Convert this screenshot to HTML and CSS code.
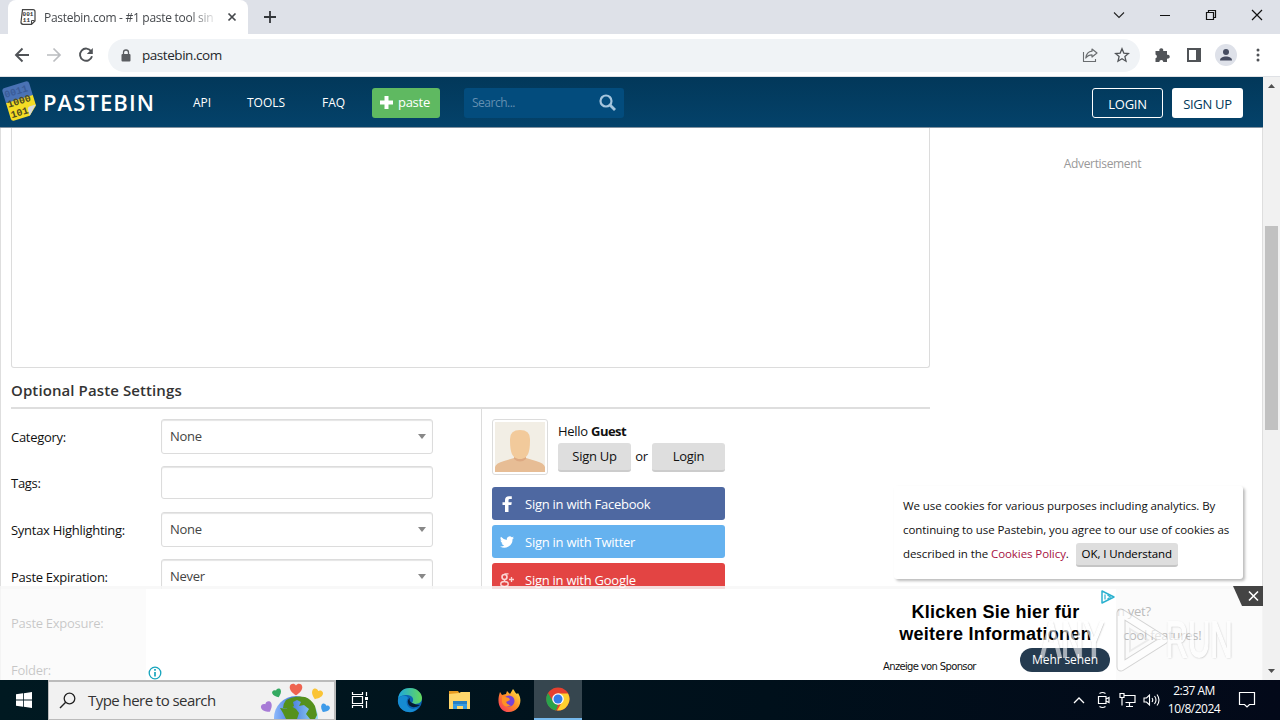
FILE: index.html
```html
<!DOCTYPE html>
<html lang="en">
<head>
  <meta charset="UTF-8" />
  <meta name="viewport" content="width=device-width, initial-scale=1" />
  <title>Pastebin.com - #1 paste tool since 2002!</title>
  <link rel="stylesheet" href="styles.css">
</head>
<body>
  <!-- browser tabs -->
  <div class="tabs">
    <div class="tab">
      <svg class="favicon" width="16" height="16" viewBox="0 0 16 16">
        <path d="M2.500 .7h10.500q2 0 2 2v9.300L11.500 15.300H3Q.8 15 1 13z" fill="#fff" stroke="#444" stroke-width="1.200"/>
        <path d="M14.500 11.500h-3V15" fill="none" stroke="#444"/>
        <text x="2.600" y="7.300">001</text>
        <text x="2.800" y="13.300">11</text>
      </svg>
      <span class="tab-title">Pastebin.com - #1 paste tool sin</span>
      <svg width="10" height="10" viewBox="0 0 10 10"><path d="M1.500 1.500l7 7M8.500 1.500l-7 7" stroke="#45484c" stroke-width="1.700"/></svg>
    </div>
    <svg class="new-tab" width="14" height="14" viewBox="0 0 14 14"><path d="M7 1v12M1 7h12" stroke="#33363a" stroke-width="1.800"/></svg>
    <div class="window-buttons">
      <svg width="12" height="12" viewBox="0 0 12 12"><path d="M1 3.500l5 5 5-5" fill="none" stroke="#222" stroke-width="1.100"/></svg>
      <svg width="12" height="12" viewBox="0 0 12 12"><path d="M1 6.500h10" stroke="#111"/></svg>
      <svg width="12" height="12" viewBox="0 0 12 12"><path d="M1.500 3.500h7v7h-7zM3.500 3.500v-2h7v7h-2" fill="none" stroke="#111" stroke-width="1.200"/></svg>
      <svg width="12" height="12" viewBox="0 0 12 12"><path d="M1 1l10 10M11 1L1 11" stroke="#111" stroke-width="1.200"/></svg>
    </div>
  </div>

  <div class="toolbar">
    <div class="nav-buttons">
      <svg width="16" height="16" viewBox="0 0 16 16"><path d="M15 8H2M8.500 1.500L2 8l6.500 6.500" fill="none" stroke="#505357" stroke-width="1.900"/></svg>
      <svg width="16" height="16" viewBox="0 0 16 16"><path d="M1 8h13M7.500 1.500L14 8l-6.500 6.500" fill="none" stroke="#bbbdc0" stroke-width="1.700"/></svg>
      <svg width="16" height="16" viewBox="0 0 16 16"><path d="M13.200 4.300A6.100 6.100 0 1 0 14 9.300" fill="none" stroke="#505357" stroke-width="1.900"/><path d="M14.800 1v6h-6z" fill="#505357"/></svg>
    </div>
    <div class="address">
      <svg width="10" height="13" viewBox="0 0 10 13"><rect x="0.500" y="5" width="9" height="7.500" rx="1" fill="#5a5d61"/><path d="M2.500 5.500V3.500a2.500 2.500 0 0 1 5 0v2" fill="none" stroke="#5a5d61" stroke-width="1.300"/></svg>
      <span class="url">pastebin.com</span>
      <svg width="16" height="16" viewBox="0 0 16 16"><path d="M1.500 5v9.500h12V12" fill="none" stroke="#6a6d70" stroke-width="1.100"/><path d="M10 2l5 4-5 4V7.800C7 7.800 5.300 8.800 3.800 11 4.300 7 6.500 4.600 10 4.200z" fill="none" stroke="#6a6d70" stroke-width="1.200" stroke-linejoin="round"/></svg>
      <svg width="16" height="16" viewBox="0 0 16 16"><path d="M8 1.800l1.800 4.300 4.700.4-3.600 3.100 1.100 4.600L8 11.700l-4 2.500 1.100-4.600L1.500 6.500l4.700-.4z" fill="none" stroke="#505357" stroke-width="1.300"/></svg>
    </div>
    <div class="toolbar-actions">
      <svg width="16" height="16" viewBox="0 0 16 16"><path d="M1.500 4h4a2 2 0 1 1 3.600 0H13v3.800a2 2 0 1 1 0 3.700V15H9.300a2 2 0 0 0-4 0H1.500v-3.700a2 2 0 0 0 0-3.800z" fill="#505357"/></svg>
      <svg width="16" height="16" viewBox="0 0 16 16"><path d="M1 1h14v14H1zM3 3v10h7V3z" fill="#505357" fill-rule="evenodd"/></svg>
      <svg class="profile" width="22" height="22" viewBox="0 0 22 22"><circle cx="11" cy="11" r="11" fill="#dee1e9"/><circle cx="11" cy="8" r="3" fill="#454b60"/><path d="M5 16.500c0-3 3-4 6-4s6 1 6 4z" fill="#454b60"/></svg>
      <svg width="4" height="16" viewBox="0 0 4 16"><circle cx="2" cy="3" r="1.500" fill="#505357"/><circle cx="2" cy="8" r="1.500" fill="#505357"/><circle cx="2" cy="13" r="1.500" fill="#505357"/></svg>
    </div>
  </div>

  <div class="viewport">
    <div class="page">
      <header class="site-header">
        <svg class="logo" width="38" height="42" viewBox="0 0 38 42">
          <g transform="rotate(-17 19 21)">
            <path d="M8 4h22q3 0 3 3v13H5V7q0-3 3-3z" fill="#4a72b5"/>
            <path d="M5 19h28v11l-9 8H8q-3 0-3-3z" fill="#f4dc25"/>
            <path d="M33 29l-9 9v-6q0-3 3-3z" fill="#d6d8dc"/>
            <text class="bits bits-top" x="6" y="14">0011</text>
            <text class="bits" x="6" y="24">1000</text>
            <text class="bits" x="6" y="35">101</text>
          </g>
        </svg>
        <span class="brand">PASTEBIN</span>
        <nav class="site-nav">
          <a class="nav-api">API</a>
          <a class="nav-tools">TOOLS</a>
          <a class="nav-faq">FAQ</a>
        </nav>
        <a class="btn-paste">
          <svg width="13" height="13" viewBox="0 0 13 13"><path d="M6.500 0v13M0 6.500h13" stroke="#fff" stroke-width="4"/></svg>
          <span>paste</span>
        </a>
        <div class="search">
          <span>Search...</span>
          <svg width="17" height="17" viewBox="0 0 17 17"><circle cx="7" cy="7" r="5.500" fill="none" stroke="#a5c5dd" stroke-width="2.200"/><path d="M11 11l5 5" stroke="#a5c5dd" stroke-width="2.800"/></svg>
        </div>
        <div class="account">
          <a class="btn-login">LOGIN</a>
          <a class="btn-signup">SIGN UP</a>
        </div>
      </header>

      <div class="content">
        <main>
          <div class="paste-box"></div>
          <h2>Optional Paste Settings</h2>
          <div class="settings">
            <div class="fields">
              <div class="field"><label>Category:</label><div class="select">None</div></div>
              <div class="field"><label>Tags:</label><div class="input"></div></div>
              <div class="field"><label>Syntax Highlighting:</label><div class="select">None</div></div>
              <div class="field"><label>Paste Expiration:</label><div class="select">Never</div></div>
              <div class="field"><label>Paste Exposure:</label></div>
              <div class="field"><label>Folder:</label></div>
            </div>
            <div class="login-panel">
              <div class="guest">
                <div class="avatar">
                  <svg width="50" height="50" viewBox="0 0 50 50"><rect width="50" height="50" fill="#f2eee5"/><path d="M0 50v-5q1-4 9-6l10-3h12l10 3q8 2 9 6v5z" fill="#e7bd95"/><path d="M19 32h12v5q-6 5-12 0z" fill="#dda982"/><path d="M15 17q0-9 10-9t10 9c0 11-1 20-10 20S15 28 15 17z" fill="#f2ca9b"/></svg>
                </div>
                <div>
                  <p class="hello">Hello <b>Guest</b></p>
                  <div class="guest-buttons"><a class="btn-grey">Sign Up</a><span>or</span><a class="btn-grey">Login</a></div>
                </div>
              </div>
              <a class="social facebook">
                <svg width="14" height="18" viewBox="0 0 14 18"><path d="M5 17v-7H2.500V7.200H5V5q0-3.800 4-3.800h2.800v2.900H9.800Q8.500 4.100 8.500 5.300v1.900h3.300l-.5 2.800H8.500v7z" fill="#fff"/></svg>
                <span>Sign in with Facebook</span>
              </a>
              <a class="social twitter">
                <svg width="14" height="14" viewBox="0 0 24 24"><path d="M24 4.600a10 10 0 0 1-2.800.8 5 5 0 0 0 2.100-2.700 10 10 0 0 1-3.100 1.200A4.900 4.900 0 0 0 11.800 8.400 14 14 0 0 1 1.700 3.200a4.900 4.900 0 0 0 1.500 6.600 5 5 0 0 1-2.200-.6c0 2.300 1.600 4.400 3.900 4.900a5 5 0 0 1-2.200.1 4.900 4.900 0 0 0 4.600 3.400A9.900 9.900 0 0 1 0 19.500a14 14 0 0 0 21.500-12.400A10 10 0 0 0 24 4.600z" fill="#fff"/></svg>
                <span>Sign in with Twitter</span>
              </a>
              <a class="social google">
                <svg width="14" height="16" viewBox="0 0 14 16"><circle cx="4.500" cy="5" r="2.500" fill="none" stroke="#fbd5d4" stroke-width="1.600"/><ellipse cx="4.500" cy="12" rx="3.700" ry="2.400" fill="none" stroke="#fbd5d4" stroke-width="1.500"/><path d="M4.500 1.800H8.500M5 7.500q-1.500 1 1 2.500M9 7.500h5M11.500 5v5" fill="none" stroke="#fbd5d4" stroke-width="1.300"/></svg>
                <span>Sign in with Google</span>
              </a>
            </div>
          </div>
        </main>
        <aside>Advertisement</aside>
      </div>

      <div class="cookies">
        We use cookies for various purposes including analytics. By<br>
        continuing to use Pastebin, you agree to our use of cookies as<br>
        described in the <a>Cookies Policy</a>. <button type="button">OK, I Understand</button>
      </div>

      <div class="ad-bar">
        <div class="ad-side"></div>
        <div class="ad-body">
          <svg class="ad-info" width="14" height="14" viewBox="0 0 14 14"><circle cx="7" cy="7" r="5.800" fill="#fff" stroke="#18a5bd" stroke-width="1.300"/><path d="M7 6v4.500M7 3v1.800" stroke="#18a5bd" stroke-width="1.700"/></svg>
          <div class="ad-copy">
            <strong>Klicken Sie hier für<br>weitere Informationen</strong>
            <div class="ad-row"><span class="sponsor">Anzeige von Sponsor</span><a class="ad-more">Mehr sehen</a></div>
          </div>
        </div>
        <div class="ad-right">
          <p>n yet?</p>
          <p class="features">cool features!</p>
        </div>
        <svg class="ad-choices" width="14" height="14" viewBox="0 0 14 14"><path d="M1 1v12l12-6z" fill="#fff" stroke="#2bb1cf" stroke-width="1.500" stroke-linejoin="round"/><path d="M4 4.500v5M6.500 5L9.500 7l-3 2" fill="none" stroke="#2bb1cf" stroke-width="1.200"/></svg>
        <svg class="ad-close" width="30" height="20" viewBox="0 0 30 20"><path d="M0 0h30v20H9z" fill="#444"/><path d="M16 5.500l9 9M25 5.500l-9 9" stroke="#fff" stroke-width="1.600"/></svg>
        <div class="watermark">
          <span>ANY</span>
          <svg width="54" height="66" viewBox="0 0 54 66"><path d="M5 6v54l43-27z" fill="none" stroke="#b8b8b8" stroke-width="9" stroke-linejoin="round"/><path d="M5 6v54l43-27z" fill="none" stroke="#fff" stroke-width="7" stroke-linejoin="round"/><path d="M14 22v22l18-11z" fill="none" stroke="#e2e2e2" stroke-width="2"/></svg>
          <span>RUN</span>
        </div>
      </div>
    </div>
    <div class="scrollbar">
      <svg width="7" height="4" viewBox="0 0 7 4"><path d="M0 4l3.500-4L7 4z" fill="#505050"/></svg>
      <div class="thumb"></div>
      <svg class="down" width="7" height="4" viewBox="0 0 7 4"><path d="M0 0l3.500 4L7 0z" fill="#505050"/></svg>
    </div>
  </div>

  <!-- windows taskbar -->
  <div class="taskbar">
    <div class="start"><svg width="16" height="16" viewBox="0 0 16 16"><path d="M0 2.300l7-1v6.300H0zM7.800 1.200L16 0v7.600H7.800zM0 8.400h7v6.300l-7-1zM7.800 8.400H16V16l-8.200-1.200z" fill="#fff"/></svg></div>
    <div class="task-search">
      <svg width="17" height="17" viewBox="0 0 17 17"><circle cx="10.500" cy="6.500" r="5.300" fill="none" stroke="#222" stroke-width="1.300"/><path d="M6.700 10.300L1 16" stroke="#222" stroke-width="1.400"/></svg>
      <span>Type here to search</span>
      <svg class="globe" width="72" height="37" viewBox="0 0 72 37">
        <defs>
          <linearGradient id="sea"><stop offset="0" stop-color="#8db9fb"/><stop offset="0.400" stop-color="#4a7ee0"/><stop offset="1" stop-color="#9fdcf4"/></linearGradient>
          <path id="heart" d="M0 7C-3 5-7 2-7-2-7-6-2-7 0-4 2-7 7-6 7-2 7 2 3 5 0 7z"/>
        </defs>
        <circle cx="36" cy="36" r="22" fill="url(#sea)"/>
        <path d="M26 18q9-5 19-3 6 2 10 9l2 9-2 4h-5l-4-5 3-5-5-4-5 1 2-4-4-2-4 2 1 4-5 3-6-1q0-4 3-8zM20 26l7 1 4-3 5 3 3 4-2 6H26l-3-6z" fill="#55911c"/>
        <use href="#heart" fill="#ef6350" transform="translate(36 7) scale(.9)"/>
        <use href="#heart" fill="#34aa61" transform="translate(17 11) rotate(-22) scale(.65)"/>
        <use href="#heart" fill="#fac436" transform="translate(57 12) rotate(22) scale(.8)"/>
        <use href="#heart" fill="#a77bd6" transform="translate(7 25) rotate(-30) scale(.8)"/>
        <use href="#heart" fill="#3e9bea" transform="translate(65 26) rotate(28) scale(.65)"/>
      </svg>
    </div>
    <div class="apps">
      <div class="app"><svg width="18" height="18" viewBox="0 0 18 18"><path d="M1.500 1v2.500h10V1M1.500 17v-2.500h10V17M1.500 5.500h10v7h-10zM15.500 1v4M15.500 10v7" fill="none" stroke="#fff" stroke-width="1.200"/><path d="M14 6h3v3h-3z" fill="#fff"/></svg></div>
      <div class="app"><svg width="26" height="26" viewBox="0 0 26 26">
        <defs><linearGradient id="edge" x2="1"><stop offset="0" stop-color="#1ca7df"/><stop offset="1" stop-color="#65d95b"/></linearGradient></defs>
        <circle cx="13" cy="13" r="12" fill="#0b63b4"/>
        <path d="M1 12C2 4 7 1 13 1c7 0 12 5 12 10 0 6-7 7-10 5 3-4 0-8-5-8-4 0-8 1-9 4z" fill="url(#edge)"/>
        <path d="M1 12c2-4 9-4 10-1-3 4-1 10 5 11l5-1q-4 5-10 4C4 24 0 18 1 12z" fill="#168bd1"/>
        <path d="M15 16c-2-1-3-3-2-5q-3 2-2 5c1 4 6 6 12 2q-4 0-8-2z" fill="#061c33"/>
      </svg></div>
      <div class="app"><svg width="24" height="22" viewBox="0 0 24 22"><path d="M1 2h9l2 3H1z" fill="#e79b22"/><path d="M1 5l10-1 2-1h9v17H1z" fill="#ffd66b"/><path d="M5 12h14v8h-4v-3H9v3H5z" fill="#389be0"/><path d="M5 12h14v3H5z" fill="#287fc2"/></svg></div>
      <div class="app"><svg width="24" height="24" viewBox="0 0 24 24">
        <defs><linearGradient id="fox" x1="1" y1="0" x2="0" y2="1"><stop offset="0" stop-color="#fff04a"/><stop offset="0.500" stop-color="#ff8b24"/><stop offset="1" stop-color="#f62b67"/></linearGradient></defs>
        <path d="M3 4l2 3 4-1 1-3 3 3 3-5c2 2 2 4 4 5l1-1c6 9 0 19-9 19S-1 15 3 4z" fill="url(#fox)"/>
        <circle cx="12" cy="13" r="5.500" fill="#7743d5"/>
        <path d="M5 8l7 2 1 2-4 2q1 3 5 3-7 4-9-3z" fill="#ff9225"/>
      </svg></div>
      <div class="app active"><svg width="24" height="24" viewBox="0 0 24 24"><circle cx="12" cy="12" r="11.500" fill="#e5402f"/><path d="M2 6l6 10 4 2-2 5.500A11.500 11.500 0 0 1 2 6z" fill="#2aa34b"/><path d="M12 6.500h10A11.500 11.500 0 0 1 11 23.500l6-10z" fill="#fdd02f"/><circle cx="12" cy="12" r="5.800" fill="#fff"/><circle cx="12" cy="12" r="4.500" fill="#337ce8"/></svg></div>
    </div>
    <div class="tray">
      <svg width="12" height="8" viewBox="0 0 12 8"><path d="M1 7l5-5 5 5" fill="none" stroke="#fff" stroke-width="1.300"/></svg>
      <svg width="14" height="18" viewBox="0 0 14 18"><path d="M1.500 5.500h7.500v7H1.500zM9 8l3-1.500v5L9 10M2.500 2.500q3-2 6 0M2.500 15.500q3 2 6 0" fill="none" stroke="#fff" stroke-width="1.200"/></svg>
      <svg width="17" height="16" viewBox="0 0 17 16"><path d="M5 3.500h11v7H6.500M10.500 11v3M7 14.500h7M1 1.500h4v4H1zM3 6v7.500" fill="none" stroke="#fff" stroke-width="1.200"/></svg>
      <svg class="volume" width="18" height="16" viewBox="0 0 18 16"><path d="M1 6h2.500l3-3v10l-3-3H1zM9 6q1.500 2 0 4M11.500 4q3 4 0 8M14 2.500q4 5.500 0 11" fill="none" stroke="#fff" stroke-width="1.100"/></svg>
      <div class="clock">2:37 AM<br>10/8/2024</div>
      <svg class="notes" width="18" height="18" viewBox="0 0 18 18"><path d="M1.500 1.500h15v12h-5L9 16l-2.500-2.500h-5z" fill="none" stroke="#fff" stroke-width="1.200"/></svg>
    </div>
  </div>
</body>
</html>
```

FILE: styles.css
```css
:root {
  --navy: #023859;
  --border: #dcdcdc;
  --font-ui: 'Open Sans', 'Noto Sans', sans-serif;
}

* {
  box-sizing: border-box;
}

body {
  margin: 0;
  width: 1280px;
  height: 720px;
  overflow: hidden;
  display: flex;
  flex-direction: column;
  font-family: var(--font-ui);
  font-size: 13px;
  letter-spacing: -0.28px;
  color: #111;
  background: #fff;
}

svg {
  display: block;
  flex: none;
}

p {
  margin: 0;
}

/* browser chrome */
.tabs {
  height: 34px;
  flex: none;
  display: flex;
  align-items: center;
  background: #dee1e8;
  padding-left: 8px;
}

.tab {
  width: 240px;
  height: 34px;
  display: flex;
  align-items: center;
  padding: 0 11px 0 12px;
  background: #fff;
  border-radius: 8px 8px 0 0;
}

.favicon text {
  font: bold 6px 'Liberation Mono', monospace;
  letter-spacing: 0;
  fill: #333;
}

.tab-title {
  width: 171px;
  margin: 0 12px 0 8px;
  flex: none;
  white-space: nowrap;
  font-size: 12px;
  letter-spacing: -0.28px;
  color: #45484c;
  -webkit-mask-image: linear-gradient(to right, #000 145px, transparent 174px);
  mask-image: linear-gradient(to right, #000 145px, transparent 174px);
}

.new-tab {
  margin-left: 15px;
}

.window-buttons {
  margin-left: auto;
  padding: 0 17px 5px 0;
  display: flex;
  gap: 34px;
}

.toolbar {
  height: 43px;
  flex: none;
  display: flex;
  align-items: center;
  border-bottom: 1px solid #dfe1e5;
  padding: 0 20px 0 14px;
}

.nav-buttons {
  display: flex;
  gap: 16px;
}

.address {
  width: 1032px;
  height: 33px;
  margin-left: 14px;
  padding: 0 10px 0 13px;
  display: flex;
  align-items: center;
  gap: 16px;
  border-radius: 17px;
  background: #f0f3f6;
}

.url {
  flex: 1;
  margin-left: -5px;
  font-size: 13.5px;
  letter-spacing: -0.45px;
  color: #26282b;
}

.toolbar-actions {
  margin-left: auto;
  display: flex;
  align-items: center;
  gap: 16px;
}

.profile {
  margin: 0 3px 0 -3px;
}

/* page */
.viewport {
  height: 603px;
  flex: none;
  display: flex;
}

.page {
  position: relative;
  width: 1263px;
  overflow: hidden;
}

.site-header {
  height: 51px;
  display: flex;
  align-items: center;
  padding: 1px 20px 0 1px;
  background: linear-gradient(#02385a, #04426a);
  border-bottom: 1px solid #8292a0;
  color: #fff;
}

.logo {
  margin-top: -3px;
}

.bits {
  font: bold 10px 'Liberation Mono', monospace;
  letter-spacing: 0;
  fill: #4e4a20;
}

.bits-top {
  fill: #3a5c98;
}

.brand {
  width: 150px;
  margin-left: 4px;
  padding-bottom: 1px;
  font-size: 22px;
  font-weight: 600;
  letter-spacing: 1.1px;
}

.site-nav {
  display: flex;
  width: 179px;
  padding-bottom: 1px;
  font-size: 12px;
  letter-spacing: 0;
}

.nav-api {
  width: 54px;
}

.nav-tools {
  width: 75px;
}

.btn-paste {
  width: 68px;
  height: 30px;
  display: flex;
  align-items: center;
  gap: 5px;
  padding: 0 0 1px 8px;
  border-radius: 3px;
  background: #5fb961;
  font-size: 13px;
}

.search {
  width: 160px;
  height: 30px;
  margin-left: 24px;
  padding: 0 8px 1px;
  display: flex;
  align-items: center;
  justify-content: space-between;
  border-radius: 3px;
  background: #034c7d;
  font-size: 12px;
  letter-spacing: -0.5px;
  color: #638fb1;
}

.account {
  display: flex;
  gap: 9px;
  margin-left: auto;
}

.btn-login,
.btn-signup {
  width: 71px;
  height: 30px;
  line-height: 32px;
  text-align: center;
  border-radius: 3px;
  background: #fff;
  color: var(--navy);
}

.btn-login {
  background: none;
  border: 1px solid #fff;
  line-height: 30px;
  color: #fff;
}

.content {
  height: 552px;
  display: flex;
  padding-left: 10px;
  border: solid #dedede;
  border-width: 0 1px;
}

main {
  width: 919px;
  flex: none;
}

.paste-box {
  height: 240px;
  border: 1px solid var(--border);
  border-top: 0;
  border-radius: 0 0 3px 3px;
}

h2 {
  margin: 0;
  height: 41px;
  line-height: 45px;
  border-bottom: 2px solid #dedede;
  font-size: 15px;
  font-weight: 600;
  letter-spacing: 0.1px;
  color: #333;
}

.settings {
  display: flex;
}

.fields {
  width: 471px;
  padding-top: 4px;
  border-right: 1px solid var(--border);
}

.field {
  height: 46.6px;
  display: flex;
  align-items: center;
}

.field label {
  width: 150px;
  padding-top: 1px;
}

.select,
.input {
  width: 272px;
  height: 35px;
  border: 1px solid var(--border);
  border-radius: 3px;
  box-shadow: inset 0 1px 1px #e5e5e5;
}

.input {
  height: 33px;
}

.select {
  display: flex;
  align-items: center;
  justify-content: space-between;
  padding: 0 6px 0 8px;
  color: #444;
}

.select::after {
  content: '';
  border: 4px solid transparent;
  border-top: 5px solid #888;
  border-bottom: 0;
}

.login-panel {
  width: 243px;
  padding: 10px 0 0 10px;
}

.guest {
  display: flex;
  gap: 10px;
  margin-bottom: 12px;
}

.avatar {
  width: 56px;
  height: 56px;
  padding: 2px;
  border: 1px solid var(--border);
  border-radius: 3px;
}

.hello {
  height: 24px;
  line-height: 25px;
}

.hello b {
  letter-spacing: -0.5px;
}

.guest-buttons {
  display: flex;
  align-items: center;
  justify-content: space-between;
  width: 167px;
}

.guest-buttons span {
  padding-bottom: 3px;
}

.btn-grey {
  width: 73px;
  height: 29px;
  line-height: 27px;
  text-align: center;
  border-radius: 3px;
  border-bottom: 2px solid #ccc;
  background: #dedede;
}

.social {
  height: 33px;
  margin-bottom: 5px;
  padding-left: 8px;
  display: flex;
  align-items: center;
  gap: 11px;
  border-radius: 3px;
  letter-spacing: -0.25px;
  color: #fff;
}

.facebook { background: #4e68a1; }
.twitter { background: #65b2ef; }
.google { background: #e34443; }

aside {
  flex: 1;
  padding: 27px 0 0 13px;
  text-align: center;
  font-size: 12px;
  letter-spacing: -0.35px;
  color: #999;
}

.cookies {
  position: absolute;
  right: 20px;
  bottom: 101px;
  width: 349px;
  height: 93px;
  padding: 8px 0 0 9px;
  border-radius: 3px;
  background: #fff;
  box-shadow: 2px 2px 3px #bbb;
  font-size: 11.5px;
  line-height: 24px;
  letter-spacing: -0.07px;
  white-space: nowrap;
}

.cookies a {
  color: #a7113f;
}

.cookies button {
  width: 102px;
  height: 24px;
  margin-left: 4px;
  padding: 0;
  border: 0;
  border-bottom: 2px solid #c5c5c5;
  border-radius: 3px;
  background: #dedede;
  font: inherit;
  line-height: 20px;
  letter-spacing: -0.1px;
}

/* sticky ad over the bottom of the page */
.ad-bar {
  position: absolute;
  inset: auto 0 0 0;
  height: 94px;
  display: flex;
  border-top: 3px solid rgba(247, 247, 247, 0.85);
}

.ad-side,
.ad-right {
  background: rgba(250, 250, 250, 0.78);
}

.ad-side {
  width: 146px;
}

.ad-body {
  width: 970px;
  background: #fff;
  display: flex;
  justify-content: space-between;
}

.ad-info {
  margin: 77px 0 0 2px;
}

.ad-copy {
  width: 234px;
  padding-top: 12px;
}

.ad-copy strong {
  display: block;
  margin-right: 7px;
  font: bold 18px/22px 'Liberation Sans', sans-serif;
  letter-spacing: 0.25px;
  text-align: center;
  color: #000;
  white-space: nowrap;
}

.ad-row {
  display: flex;
  align-items: center;
  justify-content: space-between;
  width: 228px;
  margin-top: 3px;
}

.sponsor {
  padding: 12px 0 0 1px;
  font: 10px 'DejaVu Sans', sans-serif;
  letter-spacing: -0.65px;
  white-space: nowrap;
}

.ad-more {
  width: 90px;
  height: 24px;
  flex: none;
  border-radius: 12px;
  background: #253b50;
  font-size: 12px;
  line-height: 23px;
  letter-spacing: -0.1px;
  text-align: center;
  color: #fff;
}

.ad-right {
  flex: 1;
  padding: 10px 0 0 1px;
  line-height: 24px;
  color: #bbb;
}

.ad-right .features {
  padding-left: 6px;
}

.ad-choices {
  position: absolute;
  left: 1101px;
  top: 1px;
}

.ad-close {
  position: absolute;
  right: 0;
  top: -3px;
}

.watermark {
  position: absolute;
  right: 29px;
  top: 18px;
  height: 66px;
  display: flex;
  align-items: center;
  opacity: 0.6;
  font: 50px 'Liberation Sans', sans-serif;
  letter-spacing: 0;
  color: #fff;
  -webkit-text-stroke: 2px #fff;
  text-shadow: 0 0 2px #777, 1px 1px 2px #888;
}

.watermark span {
  transform: scaleX(0.62);
  margin: 0 -19px;
}

.watermark svg {
  margin: 0 -6px 0 11px;
}

.scrollbar {
  width: 17px;
  display: flex;
  flex-direction: column;
  align-items: center;
  padding: 7px 0;
  background: #f1f1f1;
}

.thumb {
  width: 13px;
  height: 204px;
  margin-top: 138px;
  background: #c1c1c1;
}

.down {
  margin-top: auto;
}

/* taskbar */
.taskbar {
  height: 40px;
  flex: none;
  display: flex;
  background: linear-gradient(90deg, #001921, #00101b 60%, #030919);
  color: #fff;
}

.start {
  width: 48px;
  display: grid;
  place-items: center;
}

.task-search {
  width: 288px;
  display: flex;
  align-items: center;
  padding-left: 10px;
  background: #f1f1f1;
  border: 1px solid #bbb;
  border-width: 2px 2px 1px 1px;
  font-size: 15px;
  letter-spacing: -0.55px;
  color: #333;
}

.task-search span {
  flex: 1;
  margin-left: 12px;
  padding-bottom: 2px;
}

.globe {
  margin-right: 2px;
}

.apps {
  display: flex;
}

.app {
  width: 49.5px;
  display: grid;
  place-items: center;
}

.app:first-child svg {
  margin-right: 2px;
}

.app.active {
  width: 48px;
  background: #36464f;
  border-bottom: 2px solid #76b9ed;
}

.tray {
  margin-left: auto;
  display: flex;
  align-items: center;
  gap: 8px;
  padding-right: 20px;
}

.tray svg:first-child {
  margin-right: 4px;
}

.volume {
  margin: 0 1px 0 -1px;
}

.clock {
  width: 54px;
  margin-left: -3px;
  font-size: 12px;
  line-height: 18px;
  letter-spacing: -0.5px;
  text-align: center;
}

.notes {
  margin-left: 9px;
  margin-right: 4px;
}
```
